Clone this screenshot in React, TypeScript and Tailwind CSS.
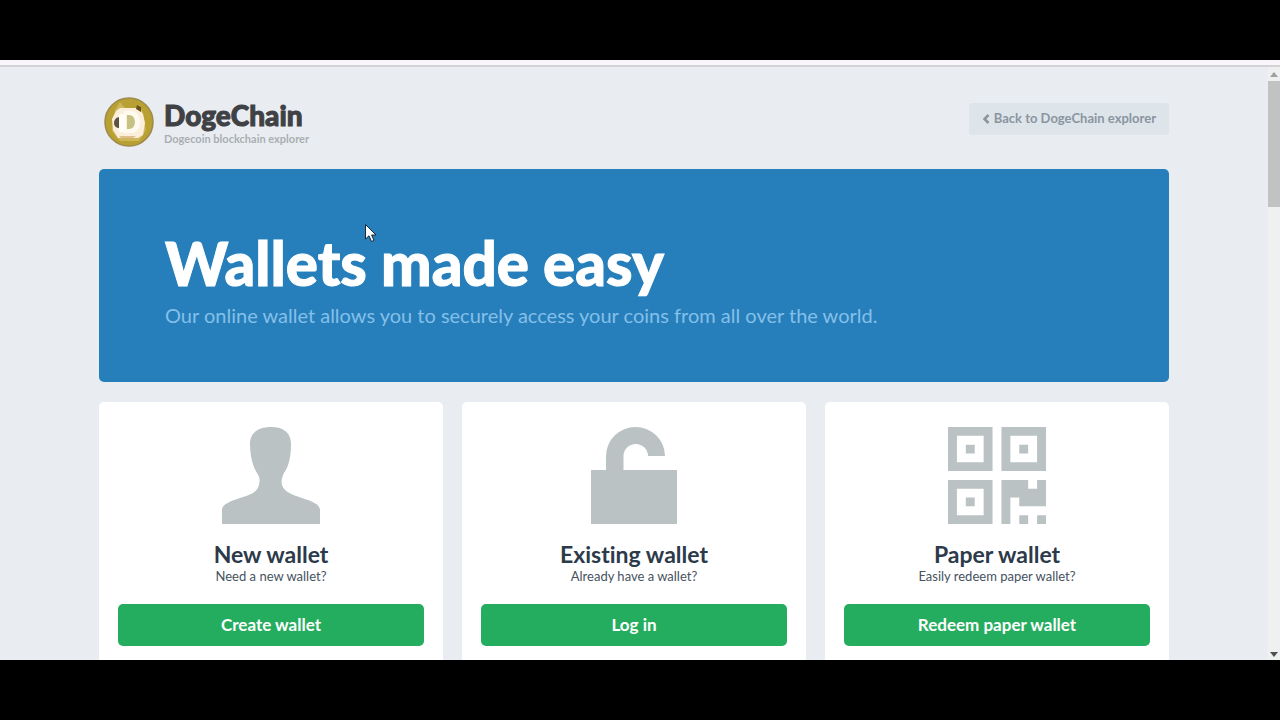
import React from "react";

interface WalletCardProps {
  icon: React.ReactNode;
  title: string;
  text: string;
  action: string;
}

const UserIcon = () => (
  <svg width="98" height="97" viewBox="0 0 98 97" fill="currentColor" aria-hidden="true">
    <path d="M49 0C36 0 28 6 28 17C28 29 31 40 35 46C38 50 38 54 37 58C35 66 27 68 18 71C9 74 0 77 0 83V97H98V83C98 77 89 74 80 71C71 68 62 65 60 58C59 54 60 50 62 46C67 39 69 29 69 17C69 6 62 0 49 0Z" />
  </svg>
);

const UnlockIcon = () => (
  <svg width="86" height="97" viewBox="0 0 86 97" fill="currentColor" aria-hidden="true">
    <path d="M0 43H15V29A29.5 29 0 0 1 74 29H57A12.25 12 0 0 0 32.5 29V43H86V97H0Z" />
  </svg>
);

const QrIcon = () => (
  <svg width="98" height="97" viewBox="0 0 11 11" preserveAspectRatio="none" fill="currentColor" aria-hidden="true">
    <path fillRule="evenodd" d="M0 0h5v5h-5zM1 1v3h3v-3zM2 2h1v1h-1z" />
    <path fillRule="evenodd" d="M6 0h5v5h-5zM7 1v3h3v-3zM8 2h1v1h-1z" />
    <path fillRule="evenodd" d="M0 6h5v5h-5zM1 7v3h3v-3zM2 8h1v1h-1z" />
    <path d="M6 6h3v1h1v-1h1v3h-3v-1h-1v3h-1zM8 10h1v1h-1zM10 10h1v1h-1z" />
  </svg>
);

const DogeLogo = () => (
  <svg width="50" height="50" viewBox="0 0 50 50" aria-hidden="true">
    <circle cx="25" cy="25" r="24" fill="#b9a032" stroke="#9c8b4c" strokeWidth="1.5" />
    <path d="M11 13L16 5L21 11H32L36 8L39 17L42 33L35 44H16L8 34Z" fill="#cdb65c" />
    <path d="M12 14L16 11H35L39 17L41 26L39 38L34 41H14L9 33L8 22Z" fill="#fbeeda" />
    <path d="M33 8L37 10V15L32 12Z" fill="#67521d" />
    <path d="M16 20V31C12 31 10 29 10 26C10 23 12 20 16 20Z" fill="#5a5344" />
    <path d="M15 17H22V35H15Z" fill="#fffdf6" />
    <path d="M23 18H25C29 18 31 21 31 25C31 29 29 32 25 32H23Z" fill="#c6c283" />
    <path d="M20 14H27C33 14 36 19 36 25C36 31 33 36 27 36H20V32H26C29 32 31 29 31 25C31 21 29 18 26 18H20Z" fill="#fffaef" />
    <path d="M15 39H32L29 41H17Z" fill="#e0bd8c" />
  </svg>
);

const WalletCard: React.FC<WalletCardProps> = ({ icon, title, text, action }) => (
  <section className="flex flex-col items-center rounded-[5px] bg-white px-[19px] pt-[25px] pb-5 text-center">
    <div className="text-[#bac2c4]">{icon}</div>
    <h2 className="mt-4 text-[23px] leading-7 font-bold text-[#2c3a4a]">{title}</h2>
    <p className="text-[13px] leading-4 text-[#46525e]">{text}</p>
    <button
      type="button"
      className="mt-5 h-[42px] w-full cursor-pointer rounded-[5px] bg-[#25ad5f] text-[17px] font-bold text-white"
    >
      {action}
    </button>
  </section>
);

const cards: WalletCardProps[] = [
  { icon: <UserIcon />, title: "New wallet", text: "Need a new wallet?", action: "Create wallet" },
  { icon: <UnlockIcon />, title: "Existing wallet", text: "Already have a wallet?", action: "Log in" },
  { icon: <QrIcon />, title: "Paper wallet", text: "Easily redeem paper wallet?", action: "Redeem paper wallet" },
];

export default function App() {
  return (
    <div className="flex h-screen flex-col overflow-hidden bg-black py-[60px] font-['Lato',sans-serif] [font-variant-ligatures:none]">
      <div className="h-[7px] shrink-0 border-b-2 border-[#d5d2d6] bg-[#f8f6f8]" />

      <div className="flex min-h-0 flex-1 bg-[#e9edf1]">
        <main className="min-w-0 flex-1 overflow-hidden">
          <div className="mx-auto w-full max-w-[1070px]">
            <header className="flex h-[102px] items-start justify-between pt-[30px]">
              <a href="#" className="flex gap-[10px] pl-[5px]">
                <DogeLogo />
                <span className="flex flex-col">
                  <span className="text-[28px] leading-9 font-black text-[#3f4145] [-webkit-text-stroke:1px_#3f4145]">
                    DogeChain
                  </span>
                  <span className="text-[11px] leading-3 font-bold text-[#a9aeb2]">Dogecoin blockchain explorer</span>
                </span>
              </a>
              <a
                href="#"
                className="mt-[6px] flex h-8 items-center gap-1 rounded-[3px] bg-[#dde4ea] px-[13px] text-[13px] font-bold text-[#8a959f]"
              >
                <svg width="8" height="10" viewBox="0 0 8 10" fill="none" stroke="currentColor" strokeWidth="2.5" aria-hidden="true">
                  <path d="M6.5 1L2.5 5L6.5 9" />
                </svg>
                Back to DogeChain explorer
              </a>
            </header>

            <div className="rounded-[5px] bg-[#267fba] px-[66px] pt-[62px] pb-[51px] text-white">
              <h1 className="text-[60px] leading-[64px] font-black [-webkit-text-stroke:1px_white]">
                Wallets made easy
              </h1>
              <p className="pt-1 text-xl leading-8 text-[#84bfe9]">
                Our online wallet allows you to securely access your coins from all over the world.
              </p>
            </div>

            <div className="mt-5 grid grid-cols-3 gap-[19px]">
              {cards.map((card) => (
                <WalletCard key={card.title} {...card} />
              ))}
            </div>
          </div>
        </main>

        {/* Scrollbar */}
        <div className="flex w-3 shrink-0 flex-col items-center bg-[#eff0f0]" aria-hidden="true">
          <svg className="mt-[5px]" width="8" height="5" viewBox="0 0 8 5" fill="#a0a0a0">
            <path d="M4 0L8 5H0Z" />
          </svg>
          <div className="mt-1 h-[126px] w-full bg-[#c1c3c2]" />
          <svg className="mt-auto mb-[3px]" width="8" height="5" viewBox="0 0 8 5" fill="#505050">
            <path d="M0 0H8L4 5Z" />
          </svg>
        </div>
      </div>

      {/* Mouse pointer */}
      <svg
        className="pointer-events-none absolute top-[224px] left-[365px]"
        width="12"
        height="19"
        viewBox="0 0 12 19"
        fill="#fff"
        stroke="#1b2733"
        aria-hidden="true"
      >
        <path d="M0.5 0.5V15L4 11.8L6.5 17.5L9 16.4L6.6 11H11Z" />
      </svg>
    </div>
  );
}
